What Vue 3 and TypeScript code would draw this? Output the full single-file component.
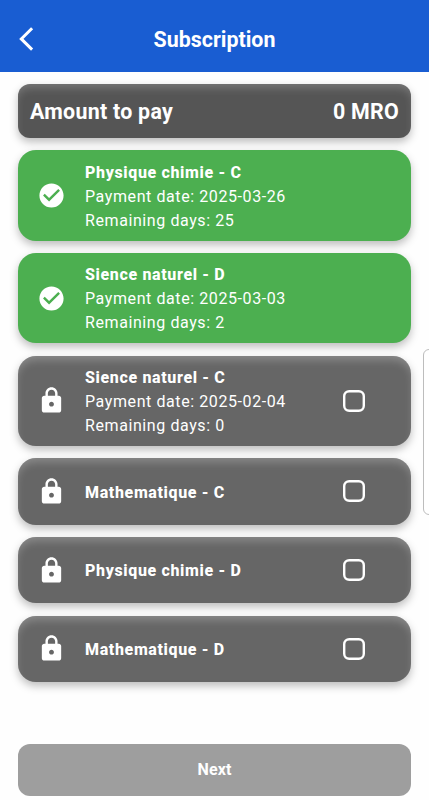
<script setup lang="ts">
interface Subject {
  name: string
  paid: boolean
  paymentDate?: string
  remainingDays?: number
}

const amount = 0

const subjects: Subject[] = [
  { name: 'Physique chimie - C', paid: true, paymentDate: '2025-03-26', remainingDays: 25 },
  { name: 'Sience naturel - D', paid: true, paymentDate: '2025-03-03', remainingDays: 2 },
  { name: 'Sience naturel - C', paid: false, paymentDate: '2025-02-04', remainingDays: 0 },
  { name: 'Mathematique - C', paid: false },
  { name: 'Physique chimie - D', paid: false },
  { name: 'Mathematique - D', paid: false },
]
</script>

<template>
  <div class="screen">
    <header class="bar">
      <button class="back" aria-label="Back">
        <svg width="15" height="24" viewBox="0 0 15 24">
          <path d="M13.1 1.2 2.3 11.9 13.1 22.6" fill="none" stroke="#fff" stroke-width="3" />
        </svg>
      </button>
      <h1 class="title">Subscription</h1>
    </header>

    <main class="content">
      <section class="amount">
        <span class="amount-label">Amount to pay</span>
        <span class="amount-value">{{ amount }} MRO</span>
      </section>

      <article
        v-for="subject in subjects"
        :key="subject.name"
        class="card"
        :class="{ paid: subject.paid, short: !subject.paymentDate }"
      >
        <svg class="icon" viewBox="0 0 24 24" fill="#fff">
          <path
            v-if="subject.paid"
            d="M12 2C6.48 2 2 6.48 2 12s4.48 10 10 10 10-4.48 10-10S17.52 2 12 2zm-2 15-5-5 1.41-1.41L10 14.17l7.59-7.59L19 8l-9 9z"
          />
          <path
            v-else
            fill-rule="evenodd"
            d="M18 8h-1V6c0-2.76-2.24-5-5-5S7 3.24 7 6v2H6c-1.1 0-2 .9-2 2v10c0 1.1.9 2 2 2h12c1.1 0 2-.9 2-2V10c0-1.1-.9-2-2-2zm-6 9c-1.1 0-2-.9-2-2s.9-2 2-2 2 .9 2 2-.9 2-2 2zm3-9H9V6c0-1.66 1.34-3 3-3s3 1.34 3 3v2z"
          />
        </svg>
        <div class="info">
          <strong class="name">{{ subject.name }}</strong>
          <template v-if="subject.paymentDate">
            <span>Payment date: {{ subject.paymentDate }}</span>
            <span>Remaining days: {{ subject.remainingDays }}</span>
          </template>
        </div>
        <svg
          v-if="!subject.paid"
          class="checkbox"
          role="checkbox"
          aria-checked="false"
          viewBox="0 0 22 22"
        >
          <rect x="1.2" y="1.2" width="19.6" height="19.6" rx="5" fill="none" stroke="#fff" stroke-width="2.4" />
        </svg>
      </article>
    </main>

    <button class="next" disabled>Next</button>
    <div class="edge-handle"></div>
  </div>
</template>

<style>
body {
  margin: 0;
  background: #fff;
}
</style>

<style scoped>
.screen {
  position: relative;
  display: flex;
  flex-direction: column;
  box-sizing: border-box;
  width: 100%;
  height: 800px;
  padding-bottom: 4.5px;
  overflow: hidden;
  background: #fefefe;
  color: #fff;
  font-family: Roboto, "Liberation Sans", sans-serif;
}

.bar {
  display: grid;
  grid-template-columns: 54px 1fr 54px;
  align-items: center;
  box-sizing: border-box;
  height: 71.5px;
  padding-top: 6px;
  background: #195dd2;
}

.back {
  display: flex;
  padding: 0 0 0 19px;
  border: 0;
  background: none;
}

.title {
  margin: 0;
  padding-top: 2px;
  font-size: 21.4px;
  font-weight: 700;
  line-height: 26px;
  text-align: center;
}

.content {
  display: flex;
  flex-direction: column;
  gap: 12.2px;
  padding: 12.3px 18px 0;
}

.amount,
.card {
  display: flex;
  align-items: center;
  box-sizing: border-box;
}

.amount {
  justify-content: space-between;
  height: 54.5px;
  padding: 1.5px 12px 0;
  border-radius: 12px;
  background: #555;
  box-shadow: inset 0 6px 8px -2px rgba(255, 255, 255, 0.2), 0 4px 8px rgba(0, 0, 0, 0.26);
  font-size: 21.4px;
  font-weight: 700;
  letter-spacing: 0.26px;
}

.card {
  height: 90.4px;
  padding-left: 20px;
  border-radius: 18px;
  background: #666;
  box-shadow: inset 0 6px 8px -2px rgba(255, 255, 255, 0.24), 0 4px 8px rgba(0, 0, 0, 0.26);
}

.card.short {
  height: 66.5px;
}

.card.paid {
  background: #4caf50;
  box-shadow: 0 4px 8px rgba(0, 0, 0, 0.26);
}

.icon {
  flex: none;
  width: 29px;
  height: 29px;
  margin-right: 18px;
  margin-left: -1px;
}

.info {
  display: flex;
  flex: 1;
  flex-direction: column;
  padding: 2.4px 0 0 1px;
  font-size: 16px;
  line-height: 24px;
  letter-spacing: 0.59px;
}

.name {
  font-weight: 800;
  letter-spacing: 0.64px;
}

.checkbox {
  flex: none;
  width: 22px;
  height: 22px;
  margin-right: 46px;
}

.next {
  height: 51.5px;
  margin: auto 18px 0;
  border: 0;
  border-radius: 12px;
  background: #9e9e9e;
  color: #fff;
  font: 700 16px/24px Roboto, "Liberation Sans", sans-serif;
  letter-spacing: 0.1px;
}

.edge-handle {
  position: absolute;
  top: 349px;
  right: -6px;
  box-sizing: border-box;
  width: 12px;
  height: 166px;
  border: 1px solid #bdbdbd;
  border-radius: 6px;
  background: #fff;
}
</style>
